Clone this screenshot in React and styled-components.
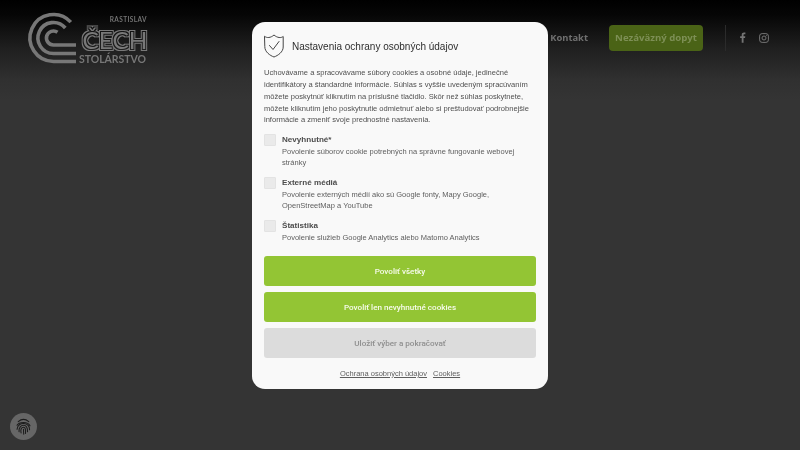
import React from "react";
import styled, { createGlobalStyle } from "styled-components";

const Global = createGlobalStyle`
  html, body { margin: 0; padding: 0; width: 800px; height: 450px; overflow: hidden; background: #333; }
  * { box-sizing: border-box; }
`;
const Page = styled.div`
  position: relative; width: 800px; height: 450px; overflow: hidden;
  background: linear-gradient(180deg, #000 0, #060606 15px, #1f1f1f 48px, #303030 80px, #343434 100px, #343434 100%);
  font-family: "Liberation Sans", sans-serif;
`;
const Header = styled.header`
  display: flex; align-items: center; height: 75px; padding: 0 31px 0 27px; filter: blur(0.55px);
`;
const Logo = styled.svg`width: 122px; height: 54px; margin-top: 1px; display: block; overflow: visible;`;
const Spacer = styled.div`flex: 1;`;
const NavLink = styled.a`
  font: 700 9.4px "Open Sans", sans-serif; color: #707070; margin-right: 21px;
`;
const Cta = styled.a`
  display: flex; align-items: center; justify-content: center; width: 94px; height: 26px;
  border-radius: 4px; background: #4a6316; color: #7d8f55;
  font: 700 9.6px "Open Sans", sans-serif; white-space: nowrap; margin-right: 22px;
`;
const Divider = styled.div`width: 1px; height: 26px; background: #2b2b2b; margin-right: 13px;`;
const Social = styled.div`display: flex; align-items: center; gap: 13px; color: #747474;`;
const Overlay = styled.section`
  position: absolute; left: 252px; top: 22px; width: 296px; height: 367px;
  border-radius: 13px; background: #f9f9f9; padding: 12px;
  display: flex; flex-direction: column; filter: blur(0.2px);
`;
const TitleRow = styled.div`display: flex; align-items: center; gap: 8px; height: 25px; margin-bottom: 9px;`;
const Title = styled.h2`margin: 0; font: 400 10px "Liberation Sans", sans-serif; color: #2e2e2e; white-space: nowrap;`;
const Intro = styled.p`margin: 0 0 5px; font: 400 7.55px/11.85px "Liberation Sans", sans-serif; color: #4f4f4f; white-space: nowrap;`;
const Options = styled.div`display: flex; flex-direction: column; margin-top: 3px;`;
const Option = styled.div`display: flex; gap: 6px; margin-bottom: 9px;`;
const Check = styled.span`
  flex: none; width: 12px; height: 12px; background: #eaeaea; border: 1px solid #e3e3e3; border-radius: 1px;
`;
const OptionText = styled.div`display: flex; flex-direction: column;`;
const OptionTitle = styled.strong`font: 700 8.1px/12px "Liberation Sans", sans-serif; color: #4c4c4c;`;
const OptionDesc = styled.span`font: 400 7.5px/11px "Liberation Sans", sans-serif; color: #5e5e5e; white-space: nowrap;`;
const Buttons = styled.div`display: flex; flex-direction: column; gap: 6px; margin-top: 3.5px;`;
const Button = styled.button`
  height: 30px; width: 100%; border: 0; border-radius: 3px; padding: 0;
  background: ${p => (p.$muted ? "#dcdcdc" : "#93c534")};
  color: ${p => (p.$muted ? "#8f8f8f" : "#f7fbec")};
  font: 500 8.1px Roboto, sans-serif;
`;
const Links = styled.div`display: flex; justify-content: center; gap: 6px; margin-top: 11px;`;
const FootLink = styled.a`font: 400 7.5px "Liberation Sans", sans-serif; color: #5e5e5e; text-decoration: underline;`;
const Fingerprint = styled.button`
  position: absolute; left: 10px; top: 413px; width: 27px; height: 27px; padding: 0;
  border: 0; border-radius: 50%; background: #666; display: flex; align-items: center; justify-content: center;
`;

const LogoMark = () => (
  <Logo viewBox="0 0 122 54">
    <defs>
      <filter id="bands" x="-10%" y="-30%" width="120%" height="160%" colorInterpolationFilters="sRGB">
        <feMorphology in="SourceGraphic" operator="dilate" radius="1" result="inner" />
        <feMorphology in="SourceGraphic" operator="dilate" radius="2" result="outer" />
        <feComposite in="outer" in2="inner" operator="out" result="ring" />
        <feMerge>
          <feMergeNode in="ring" />
          <feMergeNode in="SourceGraphic" />
        </feMerge>
      </filter>
    </defs>
    <g fill="none" stroke="#777" strokeWidth="3.6">
      <path d="M43.800 11.100 A23.500 23.500 0 1 0 26.500 50.500 H49" />
      <path d="M38.300 17 A15.500 15.500 0 1 0 26.500 42.500 H49" />
      <path d="M30.500 21.300 A7 7 0 1 0 26.500 34 H49" />
    </g>
    <text x="120" y="11" textAnchor="end" fontFamily="Lato, sans-serif" fontWeight="700" fontSize="6.5" fill="#747474" letterSpacing=".4">RASTISLAV</text>
    <text x="55.500" y="38" fontFamily="Lato, sans-serif" fontWeight="400" fontSize="24" fill="#787878" textLength="65" lengthAdjust="spacingAndGlyphs" filter="url(#bands)">ČECH</text>
    <text x="52" y="51.500" fontFamily="Lato, sans-serif" fontWeight="700" fontSize="10.500" fill="#767676" textLength="67" lengthAdjust="spacing">STOLÁRSTVO</text>
  </Logo>
);
const FbIcon = () => (
  <svg width="7" height="11" viewBox="0 0 8 12"><path d="M5.2 12V6.6h1.7l.3-2.1h-2V3.200c0-.6.2-1 1-1h1.100V.3C7 .2 6.400.2 5.800.2 4.200.2 3.100 1.100 3.100 2.900v1.600H1.300v2.100h1.800V12z" fill="currentColor" /></svg>
);
const IgIcon = () => (
  <svg width="10" height="10" viewBox="0 0 10 10" fill="none" stroke="currentColor" strokeWidth="1"><rect x=".6" y=".6" width="8.800" height="8.800" rx="2.500" /><circle cx="5" cy="5" r="2" /><circle cx="7.500" cy="2.500" r=".4" fill="currentColor" strokeWidth=".4" /></svg>
);
const ShieldIcon = () => (
  <svg width="20" height="24" viewBox="0 0 20 24" fill="none" stroke="#444" strokeWidth="1" strokeLinejoin="round" strokeLinecap="round">
    <path d="M.8 2.500 C3 4.200 6.500 4 10 1 C13.500 4 17 4.200 19.200 2.500 V13 C19.200 18 14 21.500 10 23 C6 21.500 .8 18 .8 13z" />
    <path d="M5.500 11.500 L9 15.500 L15 7.500" />
  </svg>
);
const FingerprintIcon = () => (
  <svg width="17" height="17" viewBox="0 0 21 21" fill="none" stroke="#1c1c1c" strokeWidth="1.300" strokeLinecap="round">
    <path d="M4 4.500 C8 1 13 1 17 4.500" />
    <path d="M2.500 9 C5 4.500 16 4 18.500 9.500" />
    <path d="M2.500 14 C3 8 8 6.500 11 6.800 C15 7.200 18 10 18 14.500" />
    <path d="M5 17 C4.500 11.500 7.500 9 10.500 9 C14 9 15.500 12 15.500 17" />
    <path d="M7.500 18.500 C6.500 14 8 11.500 10.500 11.500 C13 11.500 13.200 14.500 13 19" />
    <path d="M10.500 14 C10.500 16 10.500 18 10.800 20" />
  </svg>
);

const options = [
  { t: "Nevyhnutné*", d: ["Povolenie súborov cookie potrebných na správne fungovanie webovej", "stránky"] },
  { t: "Externé médiá", d: ["Povolenie externých médií ako sú Google fonty, Mapy Google,", "OpenStreetMap a YouTube"] },
  { t: "Štatistika", d: ["Povolenie služieb Google Analytics alebo Matomo Analytics"] },
];

export default function App() {
  return (
    <Page>
      <Global />
      <Header>
        <LogoMark />
        <Spacer />
        <NavLink>Kontakt</NavLink>
        <Cta>Nezáväzný dopyt</Cta>
        <Divider />
        <Social><FbIcon /><IgIcon /></Social>
      </Header>
      <Overlay>
        <TitleRow><ShieldIcon /><Title>Nastavenia ochrany osobných údajov</Title></TitleRow>
        <Intro>
          Uchovávame a spracovávame súbory cookies a osobné údaje, jedinečné<br />
          identifikátory a štandardné informácie. Súhlas s vyššie uvedeným spracúvaním<br />
          môžete poskytnúť kliknutím na príslušné tlačidlo. Skôr než súhlas poskytnete,<br />
          môžete kliknutím jeho poskytnutie odmietnuť alebo si preštudovať podrobnejšie<br />
          informácie a zmeniť svoje prednostné nastavenia.
        </Intro>
        <Options>
          {options.map(o => (
            <Option key={o.t}>
              <Check />
              <OptionText>
                <OptionTitle>{o.t}</OptionTitle>
                {o.d.map(l => <OptionDesc key={l}>{l}</OptionDesc>)}
              </OptionText>
            </Option>
          ))}
        </Options>
        <Buttons>
          <Button>Povoliť všetky</Button>
          <Button>Povoliť len nevyhnutné cookies</Button>
          <Button $muted>Uložiť výber a pokračovať</Button>
        </Buttons>
        <Links><FootLink>Ochrana osobných údajov</FootLink><FootLink>Cookies</FootLink></Links>
      </Overlay>
      <Fingerprint aria-label="Nastavenia súkromia"><FingerprintIcon /></Fingerprint>
    </Page>
  );
}
